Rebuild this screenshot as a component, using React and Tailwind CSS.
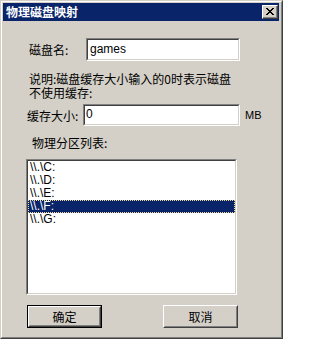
import React from "react";

const cjk = { fontFamily: '"Noto Sans CJK SC", "Liberation Sans", sans-serif' };
const latin = { fontFamily: '"Liberation Sans", "DejaVu Sans", sans-serif' };

function Sunken({ className, children }) {
  return (
    <div className={"border border-t-[#808080] border-l-[#808080] border-r-white border-b-white " + className}>
      <div className="h-full w-full border border-t-[#404040] border-l-[#404040] border-r-[#d4d0c8] border-b-[#d4d0c8] bg-white">
        {children}
      </div>
    </div>
  );
}

function Button({ label, isDefault }) {
  const inner = (
    <div className="h-full w-full border border-t-white border-l-white border-r-[#404040] border-b-[#404040]">
      <div className="flex h-full w-full items-center justify-center border border-t-[#d4d0c8] border-l-[#d4d0c8] border-r-[#808080] border-b-[#808080] text-[12px] text-black" style={cjk}>
        {label}
      </div>
    </div>
  );
  if (isDefault) {
    return <div className="h-[23px] w-[75px] border border-black">{inner}</div>;
  }
  return <div className="h-[23px] w-[75px]">{inner}</div>;
}

export default function App() {
  const drives = ["C", "D", "E", "F", "G"];
  const selected = "F";

  return (
    <div className="h-[339px] w-[283px] border border-t-[#d4d0c8] border-l-[#d4d0c8] border-r-[#404040] border-b-[#404040] bg-[#d4d0c8]">
      <div className="h-full w-full border border-t-white border-l-white border-r-[#808080] border-b-[#808080] pt-px pl-px pr-[2px] pb-[2px]">
        {/* title bar */}
        <div className="flex h-[18px] items-center justify-between bg-[#0a246a] pl-[3px] pr-[1px]">
          <span className="text-[12px] font-bold leading-none text-white" style={cjk}>物理磁盘映射</span>
          <div className="h-[14px] w-[16px] border border-t-white border-l-white border-r-[#404040] border-b-[#404040] bg-[#d4d0c8]">
            <div className="flex h-full w-full items-center justify-center border-r border-b border-[#808080]">
              <svg width="8" height="7" viewBox="0 0 8 7">
                <path d="M0 0h2v1h1v1h2v-1h1v-1h2v1h-1v1h-1v1h-1v1h1v1h1v1h1v1h-2v-1h-1v-1h-2v1h-1v1h-2v-1h1v-1h1v-1h1v-1h-1v-1h-1v-1h-1z" fill="#000" />
              </svg>
            </div>
          </div>
        </div>

        {/* body */}
        <div className="flex flex-col text-black">
          <div className="mt-[17px] flex items-center pl-[26px]">
            <span className="w-[57px] text-[12px] leading-[13px]" style={cjk}>磁盘名:</span>
            <Sunken className="h-[23px] w-[154px]">
              <div className="pl-[2px] pt-[2px] text-[12px] leading-[14px]" style={latin}>games</div>
            </Sunken>
          </div>

          <div className="mt-[11px] flex flex-col pl-[26px] text-[12px]" style={cjk}>
            <div className="leading-[14px]">说明:磁盘缓存大小输入的0时表示磁盘</div>
            <div className="leading-[14px]">不使用缓存:</div>
          </div>

          <div className="mt-[4px] flex items-center pl-[24px]">
            <span className="w-[56px] text-[12px] leading-[13px]" style={cjk}>缓存大小:</span>
            <Sunken className="h-[22px] w-[157px]">
              <div className="pl-px pt-px text-[12px] leading-[14px]" style={latin}>0</div>
            </Sunken>
            <span className="ml-[5px] text-[11px] leading-[13px]" style={latin}>MB</span>
          </div>

          <div className="mt-[10px] pl-[29px] text-[12px] leading-[13px]" style={cjk}>物理分区列表:</div>

          <div className="mt-[10px] pl-[23px]">
            <Sunken className="h-[136px] w-[211px]">
              <div className="flex flex-col">
                {drives.map((d) => (
                  <div
                    key={d}
                    className={
                      d === selected
                        ? "h-[13px] border border-dotted border-[#f5db95] bg-[#0a246a] pl-px text-[12px] leading-[11px] text-white"
                        : "h-[13px] border border-transparent pl-px text-[12px] leading-[11px] text-black"
                    }
                    style={latin}
                  >
                    {"\\\\.\\" + d + ":"}
                  </div>
                ))}
              </div>
            </Sunken>
          </div>

          <div className="mt-[10px] flex items-start justify-between pl-[24px] pr-[41px]">
            <Button label="确定" isDefault />
            <Button label="取消" />
          </div>
        </div>
      </div>
    </div>
  );
}
